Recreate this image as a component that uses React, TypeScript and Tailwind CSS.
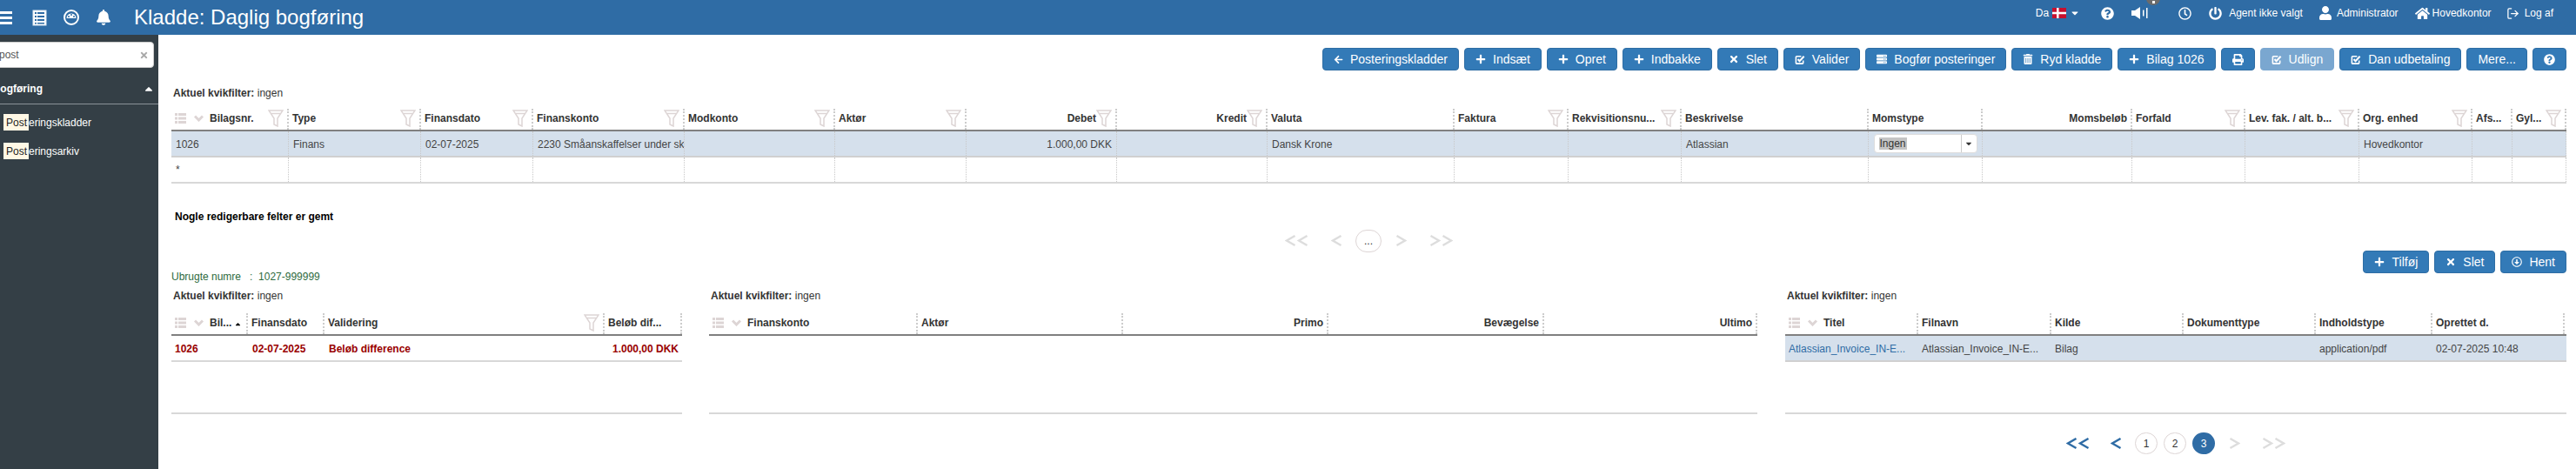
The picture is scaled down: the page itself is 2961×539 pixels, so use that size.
import React from "react";
import { FaArrowLeft, FaBell, FaCaretDown, FaCaretUp, FaHome, FaPlus, FaPowerOff, FaPrint, FaQuestionCircle, FaRegArrowAltCircleDown, FaRegClock, FaServer, FaTimes, FaTrashAlt, FaUser } from "react-icons/fa";
import { FiLogOut } from "react-icons/fi";

type Col = { w: number; label: string; filter?: boolean; right?: boolean; value?: string; first?: boolean; select?: boolean; sorted?: boolean };

const mainCols: Col[] = [
  { w: 135, label: "Bilagsnr.", filter: true, first: true, value: "1026" },
  { w: 152, label: "Type", filter: true, value: "Finans" },
  { w: 129, label: "Finansdato", filter: true, value: "02-07-2025" },
  { w: 174, label: "Finanskonto", filter: true, value: "2230 Småanskaffelser under skat" },
  { w: 173, label: "Modkonto", filter: true },
  { w: 151, label: "Aktør", filter: true },
  { w: 173, label: "Debet", filter: true, right: true, value: "1.000,00 DKK" },
  { w: 173, label: "Kredit", filter: true, right: true },
  { w: 215, label: "Valuta", value: "Dansk Krone" },
  { w: 131, label: "Faktura", filter: true },
  { w: 130, label: "Rekvisitionsnu...", filter: true },
  { w: 215, label: "Beskrivelse", value: "Atlassian" },
  { w: 131, label: "Momstype", select: true },
  { w: 172, label: "Momsbeløb", right: true },
  { w: 130, label: "Forfald", filter: true },
  { w: 131, label: "Lev. fak. / alt. b...", filter: true },
  { w: 130, label: "Org. enhed", filter: true, value: "Hovedkontor" },
  { w: 46, label: "Afs..." },
  { w: 62, label: "Gyl...", filter: true },
];

function Funnel() {
  return (
    <svg width="18" height="20" viewBox="0 0 18 20" className="shrink-0" fill="none" stroke="#ddd5d5" strokeWidth="1.5">
      <path d="M1 1H17L11 10V19L7 17V10Z" />
      <path d="M4 4.5H14" />
    </svg>
  );
}

function CheckBox() {
  return (
    <svg width="12" height="13" viewBox="0 0 13 13" fill="none" stroke="white" className="shrink-0">
      <path d="M10.5 7.5V10.5C10.5 11 10 11.5 9.5 11.5H2.5C2 11.5 1.5 11 1.5 10.5V3.5C1.5 3 2 2.5 2.5 2.5H8" strokeWidth="1.7" />
      <path d="M3.8 6L6 8.4L11.5 2.5" strokeWidth="2.2" />
    </svg>
  );
}

function Volume() {
  return (
    <svg width="19" height="16" viewBox="0 0 19 16" fill="white" className="shrink-0">
      <path d="M0 5H4L10 1V15L4 11H0Z" />
      <rect x="13" y="4.5" width="1.5" height="7" />
      <rect x="17" y="2" width="1.5" height="12" />
    </svg>
  );
}

function ListChevron() {
  return (
    <span className="flex items-center gap-[9px] mr-[7px] shrink-0">
      <svg width="13" height="12" viewBox="0 0 13 12" fill="#ddd5d5">
        <rect x="0" y="0" width="3" height="3" /><rect x="4" y="0" width="9" height="3" />
        <rect x="0" y="4.5" width="3" height="3" /><rect x="4" y="4.5" width="9" height="3" />
        <rect x="0" y="9" width="3" height="3" /><rect x="4" y="9" width="9" height="3" />
      </svg>
      <svg width="11" height="8" viewBox="0 0 11 8" fill="none" stroke="#ddd5d5" strokeWidth="3">
        <path d="M1 1.5L5.5 6L10 1.5" />
      </svg>
    </span>
  );
}

function HeadCell({ c }: { c: Col }) {
  return (
    <div style={{ width: c.w }} className="h-[24px] shrink-0 flex items-center pl-[4px] pr-[4px] pb-[3px] border-r-2 border-dotted border-[#cccccc] text-xs font-bold text-[#333333] whitespace-nowrap overflow-hidden">
      {c.first && <ListChevron />}
      {c.right ? (
        <span className="flex-1 text-right">{c.label}</span>
      ) : (
        <span className="flex-1">{c.label}</span>
      )}
      {c.sorted && <FaCaretUp size={9} color="#000000" className="mt-[3px] mr-[1px] shrink-0" />}
      {c.filter && <Funnel />}
    </div>
  );
}

function Select() {
  return (
    <div className="w-[119px] h-[22px] mx-auto bg-white rounded border border-[#dddddd] flex items-center text-xs text-[#333333]">
      <span className="flex-1 pl-[5px]"><span className="bg-[#c4c4c4] px-px">Ingen</span></span>
      <span className="w-[18px] h-full border-l border-[#cccccc] flex items-center justify-center"><FaCaretDown size={10} color="#333333" /></span>
    </div>
  );
}

function MainTable() {
  return (
    <div className="mt-[10px]">
      <div className="flex border-b-2 border-[#808080]">
        {mainCols.map((c) => <HeadCell key={c.label} c={c} />)}
      </div>
      <div className="flex h-[30px] bg-[#d5e0ec] border-b-2 border-[#d0d0d0]">
        {mainCols.map((c) => (
          <div key={c.label} style={{ width: c.w }} className={`shrink-0 flex items-center px-[5px] ${c.select ? "" : "pt-px"} border-r border-dotted border-[#c8c8c8] text-xs text-[#444444] whitespace-nowrap overflow-hidden ${c.right ? "justify-end" : ""}`}>
            {c.select ? <Select /> : c.value}
          </div>
        ))}
      </div>
      <div className="flex h-[30px] border-b-2 border-[#d8d8d8]">
        {mainCols.map((c, i) => (
          <div key={c.label} style={{ width: c.w }} className="shrink-0 flex items-center px-[5px] border-r border-dotted border-[#c8c8c8] text-xs text-[#444444]">
            {i === 0 ? "*" : ""}
          </div>
        ))}
      </div>
    </div>
  );
}

function Btn({ icon, label, disabled }: { icon?: React.ReactNode; label?: string; disabled?: boolean }) {
  return (
    <button className={`h-[26px] flex items-center gap-2 px-3 rounded border text-sm text-white whitespace-nowrap ${disabled ? "bg-[#7aa7d0] border-[#7aa7d0]" : "bg-[#337ab7] border-[#2e6da4]"}`}>
      {icon}
      {label}
    </button>
  );
}

function Chevs({ dir, n, color }: { dir: "l" | "r"; n: number; color: string }) {
  const w = n === 2 ? 27 : 13;
  const one = dir === "l" ? "M11.5 1L2 6.5L11.5 12" : "M1.5 1L11 6.5L1.5 12";
  return (
    <svg width={w} height="14" viewBox={`0 0 ${w} 14`} fill="none" stroke={color} strokeWidth="2.4">
      <path d={one} />
      {n === 2 && <path d={one} transform="translate(14 0)" />}
    </svg>
  );
}

function Kvik() {
  return (
    <div className="h-[16px] pl-[2px] flex items-center text-xs text-[#333333] whitespace-nowrap">
      <span className="font-bold">Aktuel kvikfilter:</span>&nbsp;ingen
    </div>
  );
}

function TableHead({ cols }: { cols: Col[] }) {
  return (
    <div className="flex mt-[12px] border-b-2 border-[#808080]">
      {cols.map((c) => <HeadCell key={c.label} c={c} />)}
    </div>
  );
}

function Sidebar() {
  return (
    <aside className="w-[182px] shrink-0 bg-[#343f46] overflow-hidden">
      <div className="mt-[8px] -ml-[6px] w-[183px] h-[30px] bg-white rounded border border-[#cccccc] flex items-center justify-between pl-[4px] pr-[5px] text-xs text-[#555555]">
        <span>post</span>
        <FaTimes size={11} color="#aaaaaa" />
      </div>
      <div className="mt-[15px] h-[26px] -ml-[7px] pr-[4px] flex items-start justify-between text-xs font-bold text-white">
        <span className="leading-[18px]">bogføring</span>
        <FaCaretUp size={14} className="mt-[2px]" />
      </div>
      <div className="h-px bg-[#8a9298]" />
      <div className="mt-[11px] pl-[4px] flex flex-col gap-[14px] text-xs text-white">
        {["eringskladder", "eringsarkiv"].map((t) => (
          <div key={t} className="h-[19px] flex items-center">
            <span className="h-[19px] w-[29px] pl-[3px] flex items-center bg-[#fff8e5] text-[#222222]">Post</span>
            {t}
          </div>
        ))}
      </div>
    </aside>
  );
}

function TopBar() {
  return (
    <header className="h-[40px] bg-[#2f6ca5] text-white flex items-center overflow-hidden shrink-0 relative">
      <svg width="14" height="15" viewBox="0 0 14 15" fill="white" className="ml-0">
        <rect y="0" width="14" height="3" /><rect y="6" width="14" height="3" /><rect y="12" width="14" height="3" />
      </svg>
      <svg width="17" height="19" viewBox="0 0 17 19" className="ml-[23px]">
        <rect x="1" y="1" width="15" height="17" fill="#ffffff" />
        <rect x="1" y="1" width="15" height="17" fill="none" stroke="#dfe8f2" />
        <g fill="#2f6ca5">
          <rect x="3" y="3" width="2" height="2" /><rect x="6" y="3" width="8" height="2" />
          <rect x="3" y="7" width="2" height="2" /><rect x="6" y="7" width="8" height="2" />
          <rect x="3" y="11" width="2" height="2" /><rect x="6" y="11" width="8" height="2" />
          <rect x="3" y="15" width="2" height="1.5" /><rect x="6" y="15" width="8" height="1.5" />
        </g>
      </svg>
      <svg width="18" height="18" viewBox="0 0 18 18" className="ml-[19px]">
        <circle cx="9" cy="9" r="8" fill="none" stroke="white" strokeWidth="2" />
        <path d="M3.5 10A5.5 5.5 0 0 1 14.5 10Z" fill="white" />
        <g fill="#2f6ca5"><circle cx="6" cy="8" r="1" /><circle cx="9" cy="6" r="1" /><circle cx="12" cy="8" r="1" /></g>
      </svg>
      <FaBell size={18} className="ml-[19px]" />
      <h1 className="ml-[26px] text-2xl font-normal leading-none whitespace-nowrap">Kladde: Daglig bogføring</h1>
      <div className="ml-auto pr-[26px] flex items-center text-xs h-full pb-[10px]">
        <span>Da</span>
        <svg width="16" height="12" viewBox="0 0 16 12" className="ml-[4px]">
          <rect width="16" height="12" fill="#c8102e" />
          <rect x="5" width="2.5" height="12" fill="white" />
          <rect y="4.75" width="16" height="2.5" fill="white" />
        </svg>
        <FaCaretDown size={12} className="ml-[4px]" />
        <FaQuestionCircle size={15} className="ml-[24px]" />
        <span className="ml-[20px]"><Volume /></span>
        <FaRegClock size={15} className="ml-[35px]" />
        <FaPowerOff size={15} className="ml-[20px]" />
        <span className="ml-[8px]">Agent ikke valgt</span>
        <FaUser size={16} className="ml-[18px]" />
        <span className="ml-[5px]">Administrator</span>
        <FaHome size={17} className="ml-[19px]" />
        <span className="ml-[3px]">Hovedkontor</span>
        <FiLogOut size={15} className="ml-[17px]" />
        <span className="ml-[6px]">Log af</span>
      </div>
      <span className="absolute left-[2467px] -top-[10px] w-[16px] h-[16px] rounded-full bg-[#6b6b6b] flex items-end justify-center">
        <span className="w-[3px] h-[3px] mb-[2px] bg-white" />
      </span>
    </header>
  );
}

const t1: Col[] = [
  { w: 88, label: "Bil...", first: true, sorted: true },
  { w: 88, label: "Finansdato" },
  { w: 322, label: "Validering", filter: true },
  { w: 89, label: "Beløb dif..." },
];
const t2: Col[] = [
  { w: 240, label: "Finanskonto", first: true },
  { w: 236, label: "Aktør" },
  { w: 236, label: "Primo", right: true },
  { w: 248, label: "Bevægelse", right: true },
  { w: 245, label: "Ultimo", right: true },
];
const t3: Col[] = [
  { w: 153, label: "Titel", first: true },
  { w: 153, label: "Filnavn" },
  { w: 152, label: "Kilde" },
  { w: 152, label: "Dokumenttype" },
  { w: 134, label: "Indholdstype" },
  { w: 152, label: "Oprettet d." },
];

export default function App() {
  return (
    <div className="w-[2961px] h-[539px] bg-white flex flex-col overflow-hidden font-['Liberation_Sans',Arial,sans-serif]">
      <TopBar />
      <div className="flex flex-1 min-h-0">
        <Sidebar />
        <main className="flex-1 min-w-0 pl-[15px] pr-[11px]">
          <div className="mt-[15px] flex justify-end gap-[6px]">
            <Btn icon={<FaArrowLeft size={11} />} label="Posteringskladder" />
            <Btn icon={<FaPlus size={12} />} label="Indsæt" />
            <Btn icon={<FaPlus size={12} />} label="Opret" />
            <Btn icon={<FaPlus size={12} />} label="Indbakke" />
            <Btn icon={<FaTimes size={12} />} label="Slet" />
            <Btn icon={<CheckBox />} label="Valider" />
            <Btn icon={<FaServer size={12} />} label="Bogfør posteringer" />
            <Btn icon={<FaTrashAlt size={12} />} label="Ryd kladde" />
            <Btn icon={<FaPlus size={12} />} label="Bilag 1026" />
            <Btn icon={<FaPrint size={13} />} />
            <Btn icon={<CheckBox />} label="Udlign" disabled />
            <Btn icon={<CheckBox />} label="Dan udbetaling" />
            <Btn label="Mere..." />
            <Btn icon={<FaQuestionCircle size={13} />} />
          </div>
          <div className="mt-[18px]"><Kvik /></div>
          <MainTable />
          <div className="mt-[30px] h-[16px] pl-[4px] flex items-center text-xs font-bold text-black">Nogle redigerbare felter er gemt</div>
          <div className="mt-[7px] h-[26px] flex justify-center items-center">
            <Chevs dir="l" n={2} color="#dddddd" />
            <span className="ml-[26px]"><Chevs dir="l" n={1} color="#dddddd" /></span>
            <span className="ml-[15px] w-[30px] h-[26px] rounded-full border border-[#ddd5d5] flex items-center justify-center text-xs text-[#333333]">...</span>
            <span className="ml-[16px]"><Chevs dir="r" n={1} color="#dddddd" /></span>
            <span className="ml-[26px]"><Chevs dir="r" n={2} color="#dddddd" /></span>
          </div>
          <div className="-mt-[2px] flex justify-end gap-[6px]">
            <Btn icon={<FaPlus size={12} />} label="Tilføj" />
            <Btn icon={<FaTimes size={12} />} label="Slet" />
            <Btn icon={<FaRegArrowAltCircleDown size={12} />} label="Hent" />
          </div>
          <div className="-mt-[4px] h-[16px] flex items-center text-xs text-[#2e6b3e] whitespace-pre">Ubrugte numre   :  1027-999999</div>
          <div className="mt-[6px] flex">
            <section className="w-[587px] shrink-0">
              <Kvik />
              <TableHead cols={t1} />
              <div className="h-[90px] border-b-2 border-[#d8d8d8]">
                <div className="h-[30px] pt-px flex items-center border-b-2 border-[#d8d8d8] text-xs font-bold text-[#990000]">
                  <span className="w-[88px] pl-[4px]">1026</span>
                  <span className="w-[88px] pl-[5px]">02-07-2025</span>
                  <span className="w-[322px] pl-[5px]">Beløb difference</span>
                  <span className="w-[89px] pr-[4px] text-right">1.000,00 DKK</span>
                </div>
              </div>
            </section>
            <section className="w-[1205px] ml-[31px] shrink-0">
              <Kvik />
              <TableHead cols={t2} />
              <div className="h-[90px] border-b-2 border-[#d8d8d8]" />
            </section>
            <section className="w-[898px] ml-[32px] shrink-0">
              <Kvik />
              <TableHead cols={t3} />
              <div className="h-[90px] border-b-2 border-[#d8d8d8]">
                <div className="h-[30px] pt-px flex items-center bg-[#d5e0ec] border-b-2 border-[#d0d0d0] text-xs text-[#444444] whitespace-nowrap">
                  <span className="w-[153px] pl-[4px] text-[#2f6ca5]">Atlassian_Invoice_IN-E...</span>
                  <span className="w-[153px] pl-[4px]">Atlassian_Invoice_IN-E...</span>
                  <span className="w-[152px] pl-[4px]">Bilag</span>
                  <span className="w-[152px] pl-[4px]" />
                  <span className="w-[134px] pl-[4px]">application/pdf</span>
                  <span className="w-[152px] pl-[4px]">02-07-2025 10:48</span>
                </div>
              </div>
              <div className="mt-[21px] h-[25px] flex justify-center items-center">
                <Chevs dir="l" n={2} color="#2f6ca5" />
                <span className="ml-[24px]"><Chevs dir="l" n={1} color="#2f6ca5" /></span>
                <span className="ml-[15px] w-[26px] h-[25px] rounded-full border border-[#ddd5d5] flex items-center justify-center text-xs text-[#333333]">1</span>
                <span className="ml-[7px] w-[26px] h-[25px] rounded-full border border-[#ddd5d5] flex items-center justify-center text-xs text-[#333333]">2</span>
                <span className="ml-[7px] w-[26px] h-[25px] rounded-full bg-[#2f6ca5] flex items-center justify-center text-xs text-white">3</span>
                <span className="ml-[16px]"><Chevs dir="r" n={1} color="#dddddd" /></span>
                <span className="ml-[25px]"><Chevs dir="r" n={2} color="#dddddd" /></span>
              </div>
            </section>
          </div>
        </main>
      </div>
    </div>
  );
}
